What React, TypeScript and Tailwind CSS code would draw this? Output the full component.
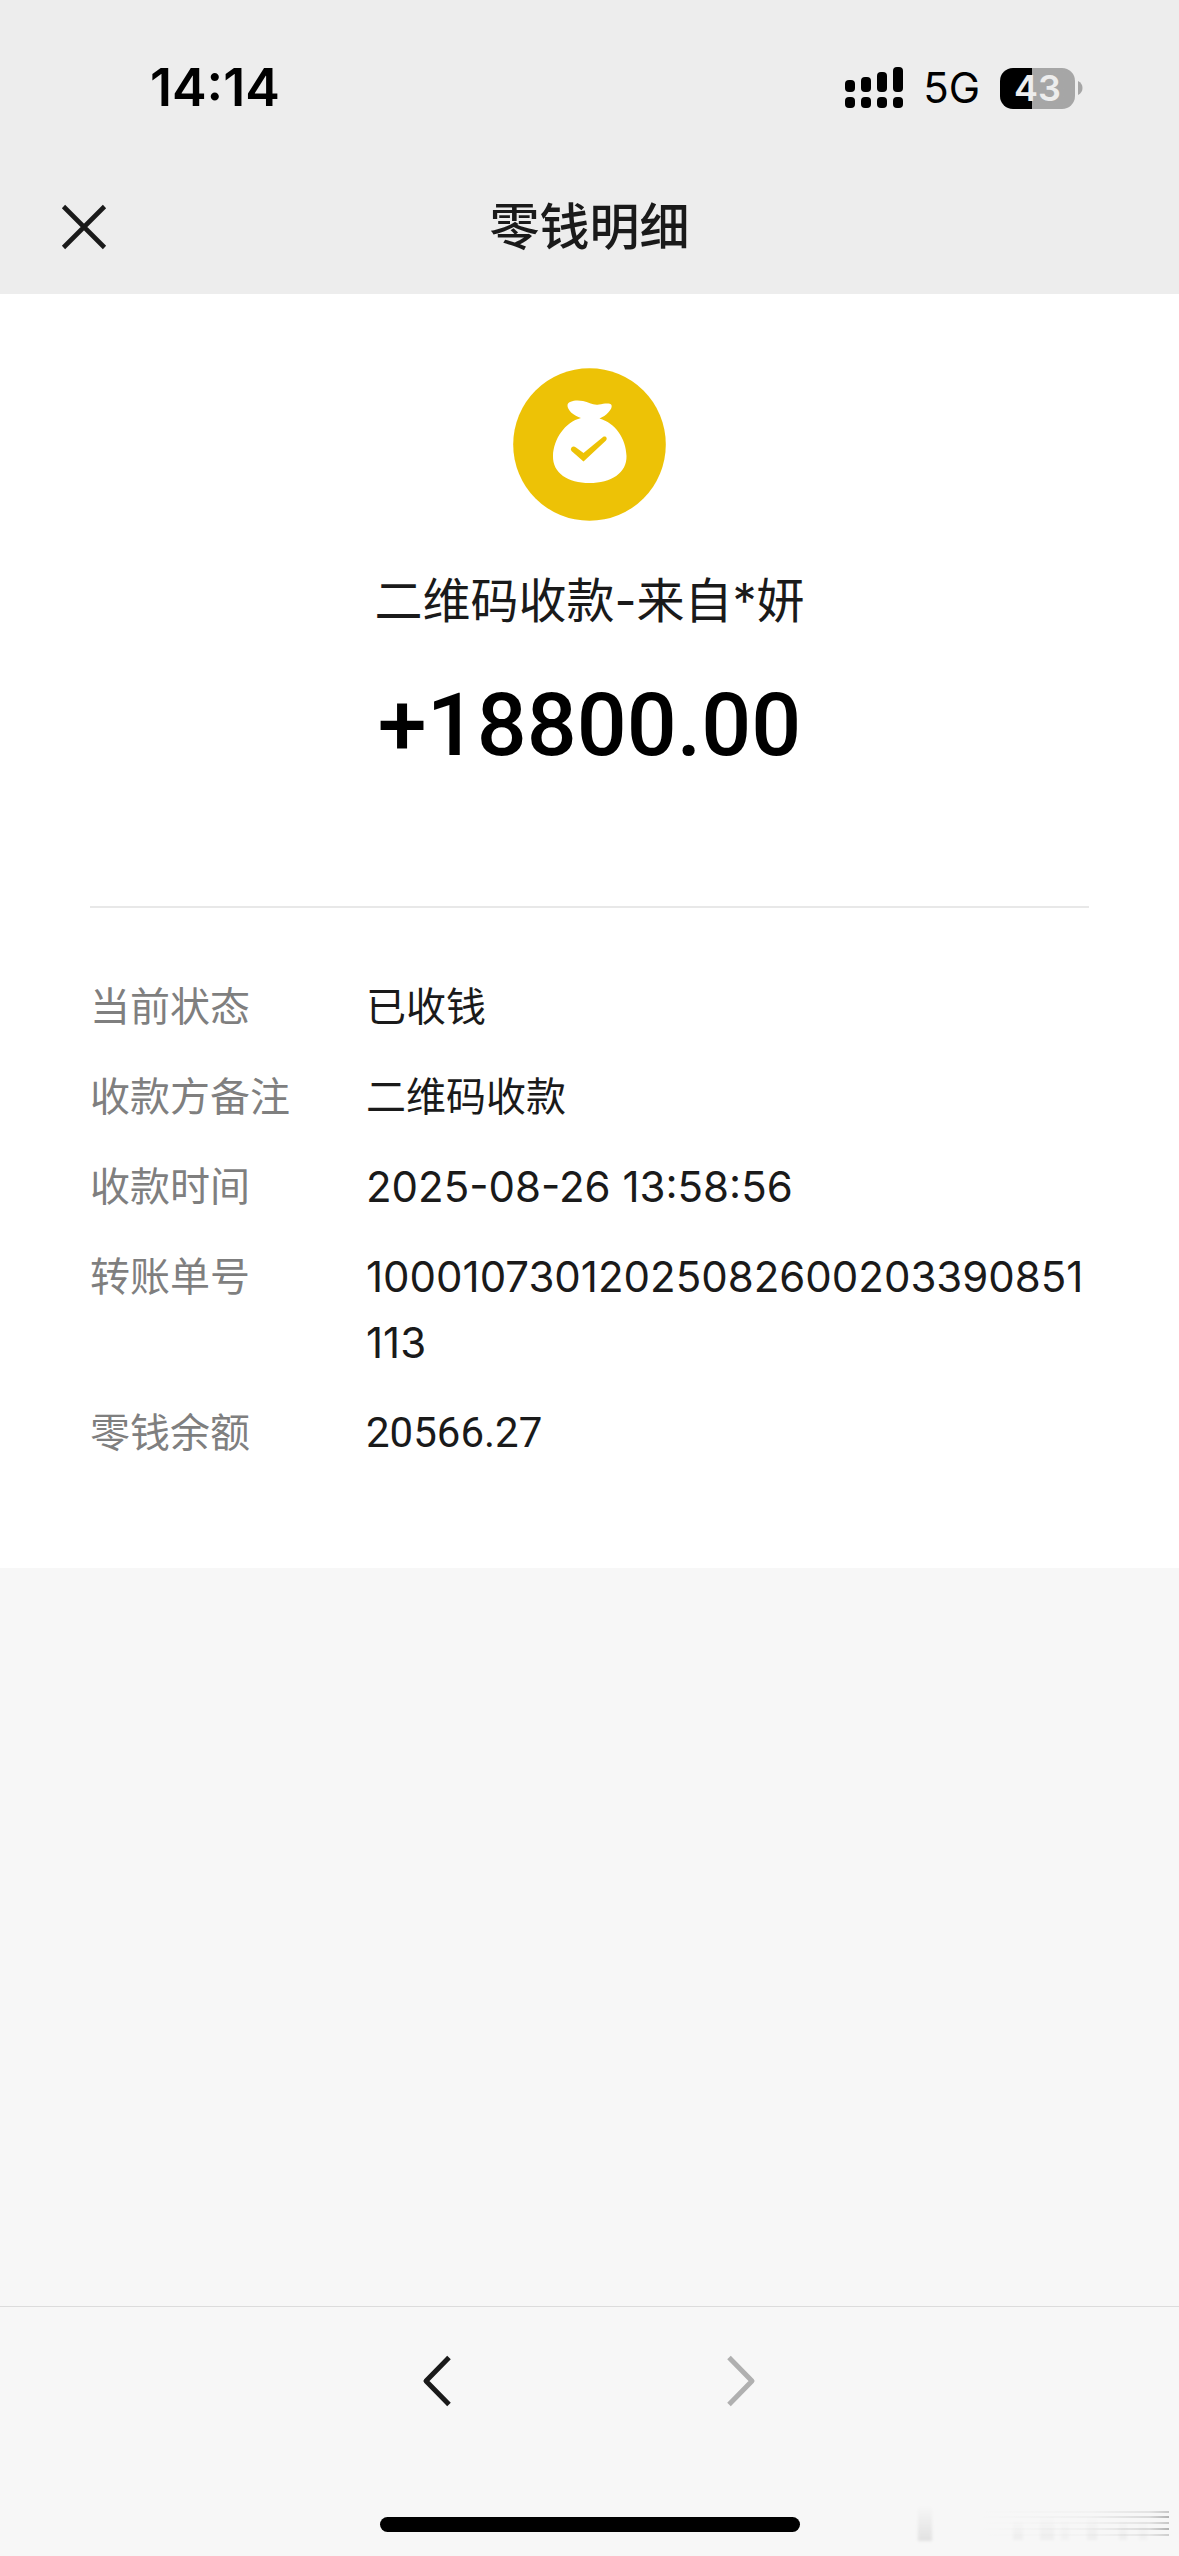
import { clsx } from 'clsx';

type DetailRow = {
  label: string;
  value: string;
  kind: 'text' | 'number' | 'money';
};

const rows: DetailRow[] = [
  { label: '当前状态', value: '已收钱', kind: 'text' },
  { label: '收款方备注', value: '二维码收款', kind: 'text' },
  { label: '收款时间', value: '2025-08-26 13:58:56', kind: 'number' },
  { label: '转账单号', value: '10001073012025082600203390851113', kind: 'number' },
  { label: '零钱余额', value: '20566.27', kind: 'money' },
];

export default function App() {
  return (
    <div className="min-h-screen flex flex-col bg-[#f7f7f7] text-[#1a1a1a] font-['Inter','Noto_Sans_CJK_SC',sans-serif]">
      {/* HEADER */}
      <header className="bg-[#ededed] pb-4">
        <StatusBar />
        <div className="relative h-[102px] flex items-center justify-center">
          <button aria-label="关闭" className="absolute left-[60px]">
            <CloseIcon />
          </button>
          <h1 className="text-[50px] leading-[72px] font-medium">零钱明细</h1>
        </div>
      </header>

      {/* BILL */}
      <main className="bg-white px-[90px] pt-[74px] pb-[102px]">
        <section className="flex flex-col items-center">
          <MoneyBagIcon />
          <p className="mt-11 text-[48px] leading-[72px]">二维码收款-来自*妍</p>
          <p className="mt-9 text-[88px] leading-[104px] font-medium text-black font-['Roboto',sans-serif]">+18800.00</p>
        </section>

        <dl className="mt-[129px] pt-[66px] border-t-2 border-[#e8e8e8] flex flex-col gap-6">
          {rows.map((row) => (
            <div key={row.label} className="flex text-[40px] leading-[66px]">
              <dt className="w-[276px] shrink-0 text-[#7f7f7f]">{row.label}</dt>
              <dd
                className={clsx(
                  'flex-1 min-w-0 break-all',
                  row.kind !== 'text' && 'text-[42px]',
                  row.kind === 'money' && "font-['Roboto',sans-serif]"
                )}
              >
                {row.value}
              </dd>
            </div>
          ))}
        </dl>
      </main>

      <BottomBar />
    </div>
  );
}

// --- SUB-COMPONENTS ---

function StatusBar() {
  return (
    <div className="h-[176px] pl-[150px] pr-24 flex items-center justify-between text-black">
      <span className="text-[52px] leading-[60px] font-semibold">14:14</span>
      <div className="flex items-center">
        <svg width="58" height="42" viewBox="0 0 58 42" fill="currentColor" aria-hidden="true">
          <rect x="0" y="13" width="10" height="12" rx="4" />
          <rect x="16" y="10" width="10" height="15" rx="4" />
          <rect x="32" y="5" width="10" height="20" rx="4" />
          <rect x="48" y="0" width="10" height="25" rx="4" />
          <rect x="0" y="30" width="10" height="11" rx="4" />
          <rect x="16" y="30" width="10" height="11" rx="4" />
          <rect x="32" y="30" width="10" height="11" rx="4" />
          <rect x="48" y="30" width="10" height="11" rx="4" />
        </svg>
        <span className="ml-5 text-[42px] leading-[60px]">5G</span>
        <div className="ml-5 w-[75px] h-[41px] rounded-[13px] bg-linear-to-r from-black from-43% to-[#a6a6a6] to-43% flex items-center justify-center text-[36px] leading-[41px] font-semibold text-[#ededed]">
          43
        </div>
        <svg className="ml-[3px]" width="5" height="14" viewBox="0 0 5 14" fill="#a6a6a6" aria-hidden="true">
          <path d="M0 0C3 1.500 4.500 4 4.500 7S3 12.500 0 14Z" />
        </svg>
      </div>
    </div>
  );
}

function CloseIcon() {
  return (
    <svg width="48" height="48" viewBox="0 0 48 48" fill="none" stroke="#1a1a1a" strokeWidth="4.600" aria-hidden="true">
      <path d="M3.500 3.500L44.500 44.500M44.500 3.500L3.500 44.500" />
    </svg>
  );
}

function MoneyBagIcon() {
  return (
    <svg width="153" height="153" viewBox="0 0 153 153" aria-hidden="true">
      <circle cx="76.500" cy="76.500" r="76.300" fill="#edc206" />
      <path
        d="M68 50C61 48 54 42 54.500 37C55 33 63 31.500 70 33C76 34.500 80 37.500 86 36.500C91 35.500 97 34.500 98.500 37C100 41 93 48 86.500 50.500C102 55 113 70 113.500 88C114 105 98 115 76.500 115C55 115 39.500 105 40 88C40.500 71 52 54 68 50Z"
        fill="#fff"
      />
      <path
        d="M58.500 79.500C60 78 61.500 78.500 63 79.500L70.500 85L90 69C92.500 67.500 95 70 93 72.500L70.500 93.500L58.500 83Q57 81 58.500 79.500Z"
        fill="#edc206"
      />
    </svg>
  );
}

function BottomBar() {
  return (
    <footer className="relative mt-auto pb-6 border-t border-[#dcdcdc] flex flex-col items-center">
      <nav className="h-[148px] flex items-center gap-[272px]">
        <button aria-label="后退">
          <svg width="32" height="56" viewBox="0 0 32 56" fill="none" stroke="#1a1a1a" strokeWidth="5" strokeLinejoin="round" aria-hidden="true">
            <path d="M27 4.500L4 28L27 51.500" />
          </svg>
        </button>
        <button aria-label="前进" disabled>
          <svg width="32" height="56" viewBox="0 0 32 56" fill="none" stroke="#b0b0b0" strokeWidth="5" strokeLinejoin="round" aria-hidden="true">
            <path d="M3 4.500L26 28L3 51.500" />
          </svg>
        </button>
      </nav>
      <div className="mt-[62px] w-[420px] h-[15px] rounded-full bg-black" />
      <CornerMark />
    </footer>
  );
}

// faint smudge in the bottom right corner
function CornerMark() {
  return (
    <svg className="absolute right-2 bottom-2" width="256" height="44" viewBox="0 0 256 44" aria-hidden="true">
      <defs>
        <linearGradient id="streak" x1="0" x2="1">
          <stop offset="0" stopColor="#000" stopOpacity="0" />
          <stop offset="0.600" stopColor="#000" stopOpacity="0.030" />
          <stop offset="0.900" stopColor="#000" stopOpacity="0.120" />
          <stop offset="1" stopColor="#000" stopOpacity="0.280" />
        </linearGradient>
        <linearGradient id="blot" x1="0" x2="0" y1="0" y2="1">
          <stop offset="0" stopColor="#000" stopOpacity="0" />
          <stop offset="1" stopColor="#000" stopOpacity="0.090" />
        </linearGradient>
        <filter id="soft" x="-10%" y="-20%" width="120%" height="140%">
          <feGaussianBlur stdDeviation="1.500" />
        </filter>
      </defs>
      <g filter="url(#soft)" fill="url(#blot)">
        <rect x="3" y="2" width="14" height="35" />
        <rect x="98" y="16" width="10" height="20" opacity="0.400" />
        <rect x="125" y="12" width="14" height="24" opacity="0.400" />
        <rect x="146" y="16" width="8" height="20" opacity="0.300" />
        <rect x="172" y="12" width="10" height="24" opacity="0.400" />
        <rect x="204" y="16" width="8" height="20" opacity="0.400" />
        <rect x="224" y="16" width="8" height="20" opacity="0.300" />
      </g>
      <g fill="url(#streak)">
        <rect x="60" y="7" width="194" height="2" opacity="0.700" />
        <rect x="60" y="12" width="194" height="2" />
        <rect x="60" y="18" width="194" height="2" opacity="0.700" />
        <rect x="60" y="24" width="194" height="2" />
        <rect x="60" y="30" width="194" height="2" opacity="0.600" />
      </g>
    </svg>
  );
}
